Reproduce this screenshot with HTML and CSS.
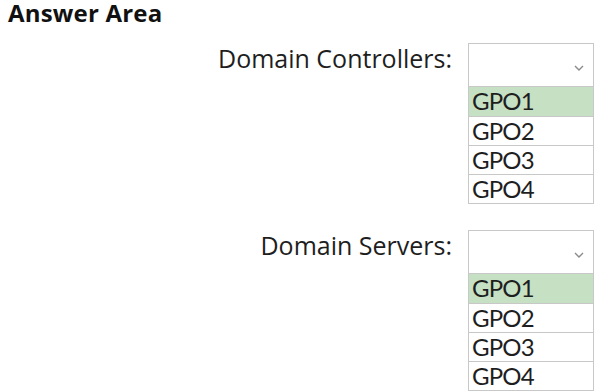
FILE: index.html
```html
<!DOCTYPE html>
<html>
<head>
<meta charset="utf-8">
<link rel="stylesheet" href="styles.css">
</head>
<body>
<div class="page">
  <h1 class="title">Answer Area</h1>
  <div class="group">
    <div class="label">Domain Controllers:</div>
    <div class="select">
      <div class="box">
        <svg class="chev" width="10" height="6" viewBox="0 0 10 6"><path d="M1 1 L5 5 L9 1" fill="none" stroke="#8a8a8a" stroke-width="1.4"/></svg>
      </div>
      <div class="opt sel">GPO1</div>
      <div class="opt">GPO2</div>
      <div class="opt">GPO3</div>
      <div class="opt">GPO4</div>
    </div>
  </div>
  <div class="group second">
    <div class="label">Domain Servers:</div>
    <div class="select">
      <div class="box">
        <svg class="chev" width="10" height="6" viewBox="0 0 10 6"><path d="M1 1 L5 5 L9 1" fill="none" stroke="#8a8a8a" stroke-width="1.4"/></svg>
      </div>
      <div class="opt sel">GPO1</div>
      <div class="opt">GPO2</div>
      <div class="opt">GPO3</div>
      <div class="opt">GPO4</div>
    </div>
  </div>
</div>
</body>
</html>
```
FILE: styles.css
```css
html, body {
  margin: 0;
  padding: 0;
  background: #fff;
}
.page {
  font-family: "Open Sans", "Noto Sans", sans-serif;
  color: #1e1e1e;
  padding: 0 0 0 8px;
}
.title {
  margin: 0;
  font-size: 24px;
  font-weight: 700;
  line-height: 26px;
  letter-spacing: 0.2px;
  color: #111;
}
.group {
  display: flex;
  align-items: flex-start;
  margin-top: 17px;
}
.group.second {
  margin-top: 26px;
}
.label {
  width: 444px;
  text-align: right;
  font-size: 25px;
  line-height: 30px;
  padding-right: 16px;
  color: #1e1e1e;
}
.select {
  width: 126px;
  border: 1px solid #c8c8c8;
  box-sizing: border-box;
}
.box {
  height: 42px;
  display: flex;
  align-items: center;
  justify-content: flex-end;
  padding-right: 9px;
  padding-top: 6px;
  box-sizing: border-box;
}
.opt {
  height: 29px;
  border-top: 1px solid #c8c8c8;
  box-sizing: border-box;
  font-family: "Lato", "Open Sans", sans-serif;
  font-size: 24px;
  line-height: 28px;
  letter-spacing: -0.8px;
  padding-left: 3px;
  color: #1e1e1e;
}
.opt.sel {
  background: #c6e0c4;
  height: 30px;
}
```
